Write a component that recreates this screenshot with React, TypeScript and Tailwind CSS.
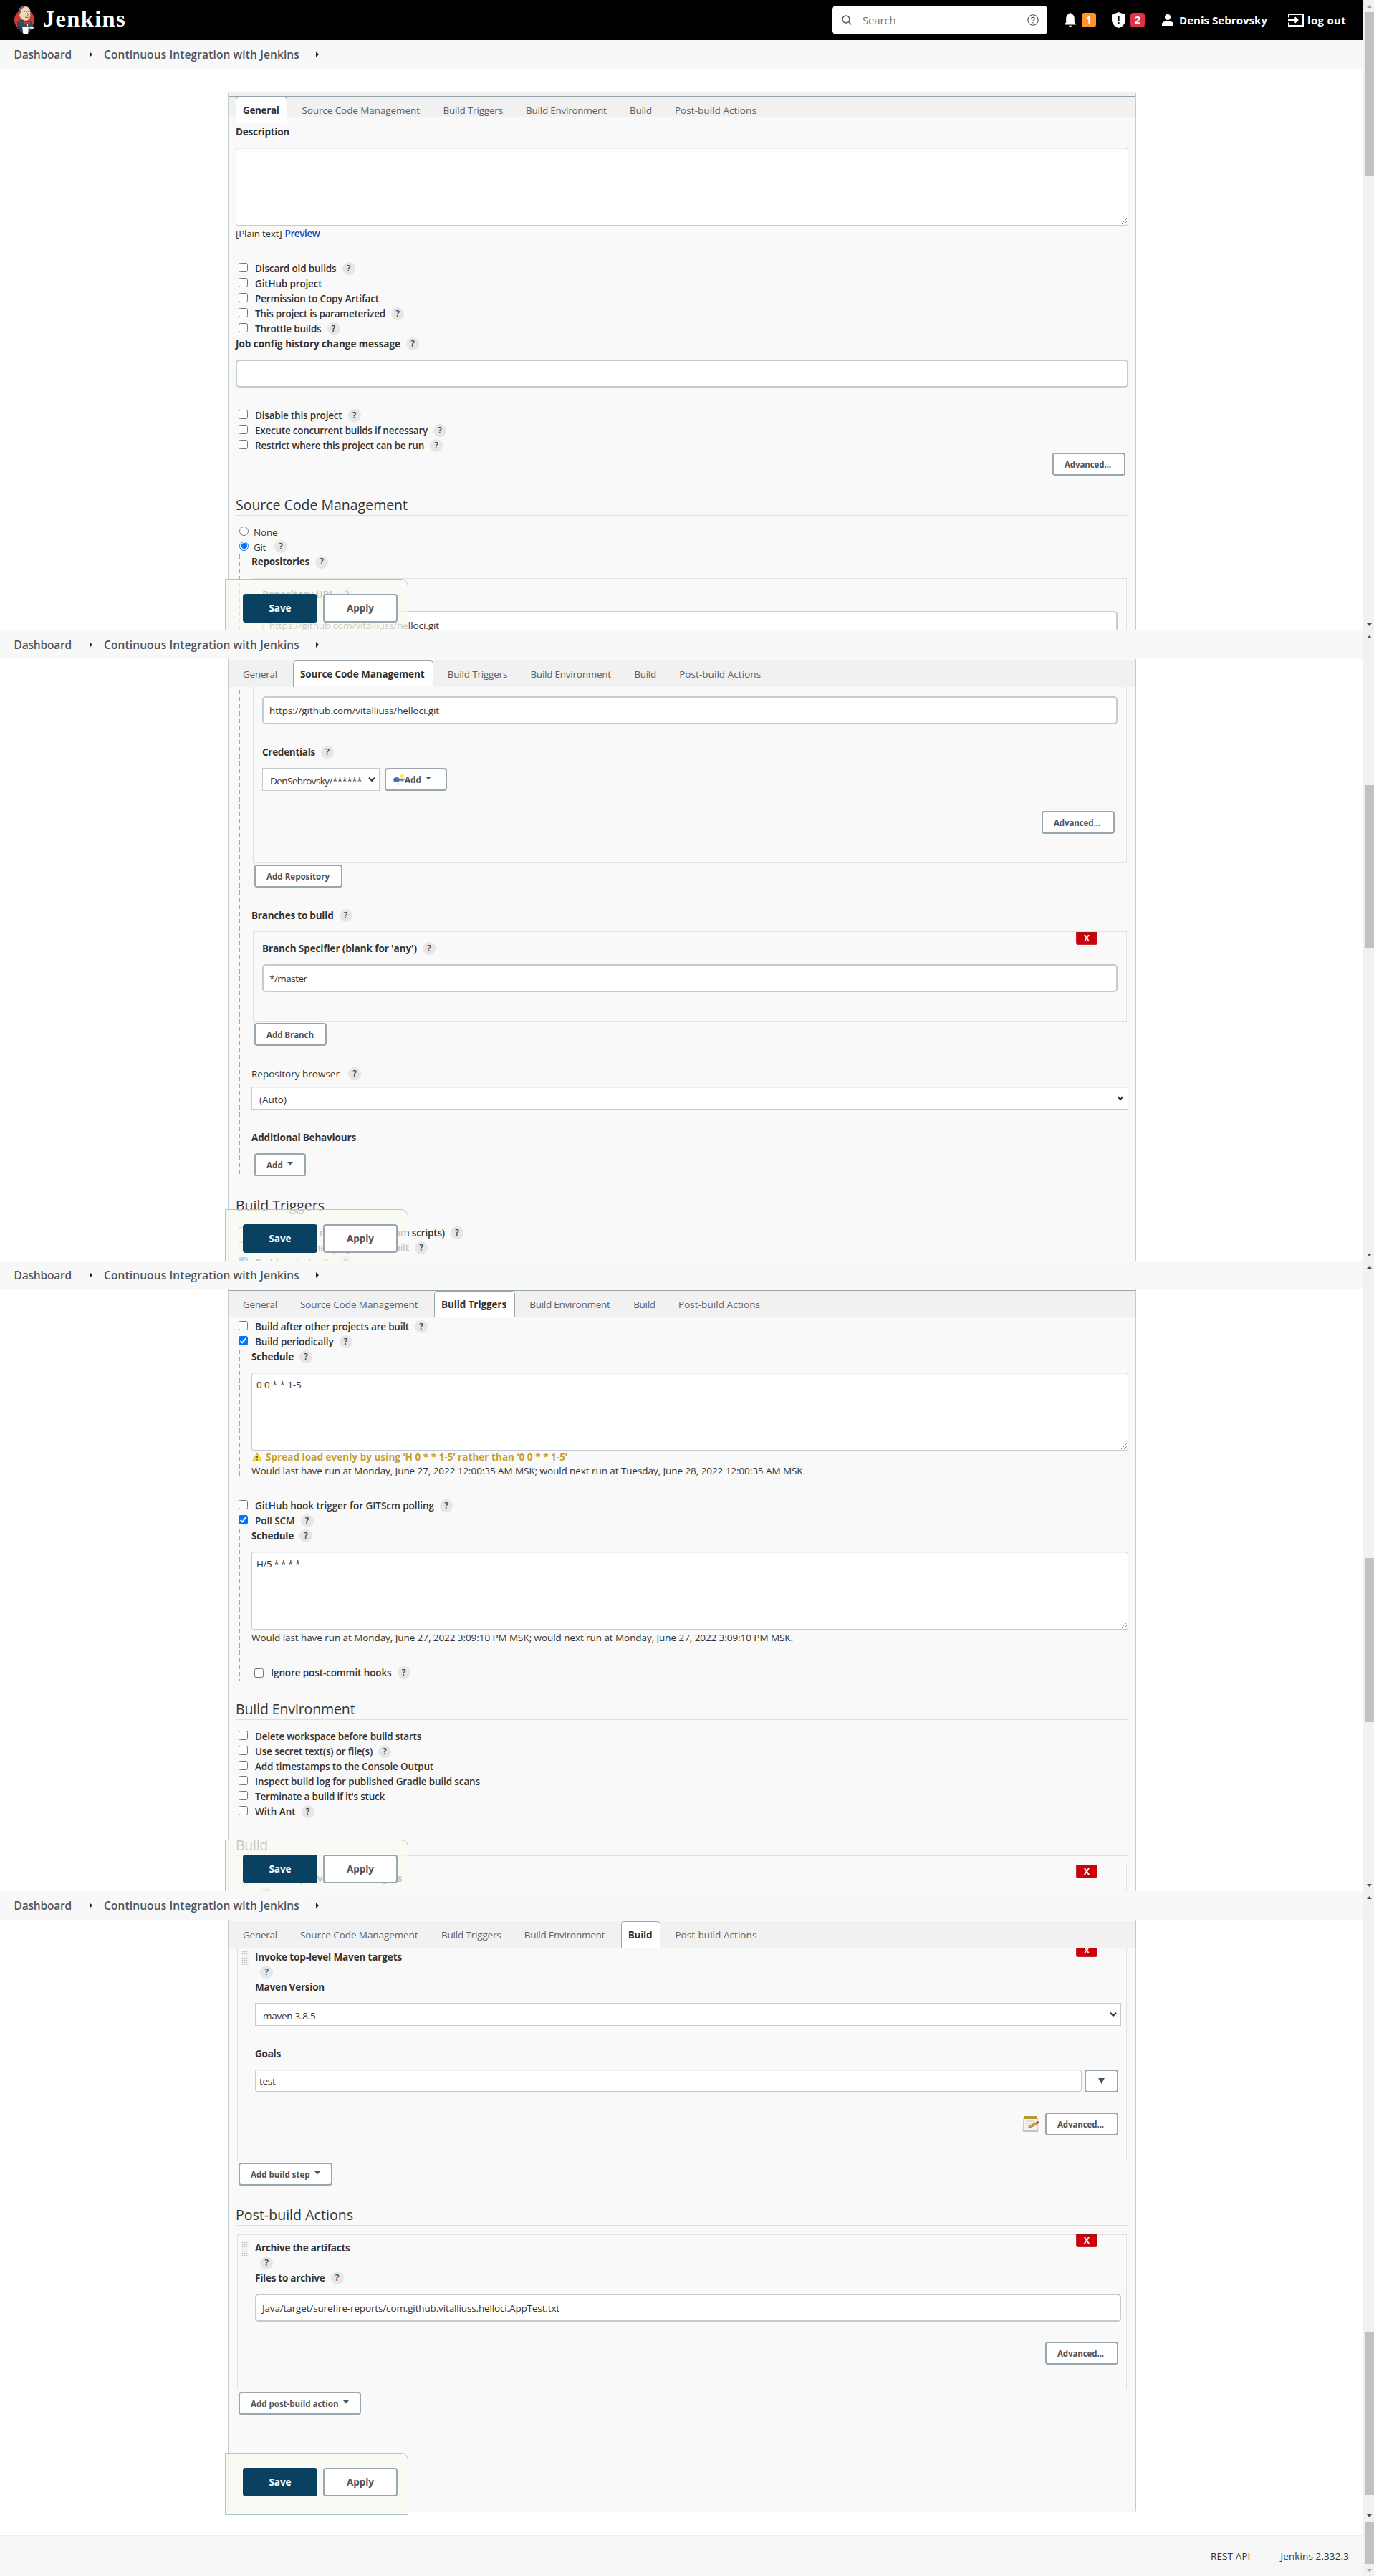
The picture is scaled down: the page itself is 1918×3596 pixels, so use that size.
import React, { useLayoutEffect, useRef, useState } from "react";

/** Inline text whose tracking is adjusted so that it takes `w` pixels. */
function T({ children, w, className = "" }: { children: string; w: number; className?: string }) {
  const ref = useRef<HTMLSpanElement>(null);
  const [spacing, setSpacing] = useState(0);
  useLayoutEffect(() => {
    if (ref.current) {
      const natural = ref.current.getBoundingClientRect().width;
      setSpacing((w - natural) / children.length);
    }
  }, []);
  return (
    <span ref={ref} className={`inline-block shrink-0 whitespace-pre ${className}`} style={{ letterSpacing: `${spacing}px` }}>
      {children}
    </span>
  );
}

function Help({ className = "ml-2" }: { className?: string }) {
  return (
    <span
      className={`mb-px flex h-[18px] w-[18px] shrink-0 items-center justify-center rounded-full bg-[#e6e6e6] pb-px text-[12.5px] font-semibold text-[#3c4147] ${className}`}
    >
      ?
    </span>
  );
}

function Label({ text, w, help, className = "" }: { text: string; w: number; help?: boolean; className?: string }) {
  return (
    <div className={`flex h-[21px] items-center ${className}`}>
      <T w={w} className="mb-[2px] font-bold">{text}</T>
      {help && <Help />}
    </div>
  );
}

function Check({ text, w, help, checked, className = "", low }: { text: string; w: number; help?: boolean; checked?: boolean; className?: string; low?: boolean }) {
  return (
    <div className={`flex h-[21px] items-center pl-1 ${className}`}>
      <span
        className={`flex h-[13px] w-[13px] shrink-0 items-center justify-center rounded-[2.5px] border ${low ? "" : "mb-1"} ${
          checked ? "border-[#0075ff] bg-[#0075ff]" : "border-[#767676] bg-white"
        }`}
      >
        {checked && (
          <svg viewBox="0 0 11 11" className="h-[11px] w-[11px]">
            <path d="M1.6 5.8 L4.2 8.4 L9.4 2" fill="none" stroke="#fff" strokeWidth="1.9" />
          </svg>
        )}
      </span>
      <T w={w} className="mb-[2px] ml-[10px] font-semibold">{text}</T>
      {help && <Help />}
    </div>
  );
}

function Radio({ text, w, help, checked, className = "" }: { text: string; w: number; help?: boolean; checked?: boolean; className?: string }) {
  return (
    <div className={`flex h-[21px] items-center pl-[5px] ${className}`}>
      <span className={`mb-[3px] flex h-[13px] w-[13px] shrink-0 items-center justify-center rounded-full border bg-white ${checked ? "border-[#0075ff]" : "border-[#767676]"}`}>
        {checked && <span className="h-[8px] w-[8px] rounded-full bg-[#0075ff]" />}
      </span>
      <T w={w} className="ml-[7px]">{text}</T>
      {help && <Help className="ml-3" />}
    </div>
  );
}

function Heading({ text, w, className = "" }: { text: string; w: number; className?: string }) {
  return (
    <h2 className={`flex h-[30px] items-center border-b border-[#dcdfe1] text-[19.5px] leading-none font-medium text-[#333] ${className}`}>
      <T w={w}>{text}</T>
    </h2>
  );
}

function Input({ text, w, className = "" }: { text?: string; w?: number; className?: string }) {
  return (
    <div className={`flex h-[39px] items-center rounded-[5px] border-2 border-[#c3cdd1] bg-white pl-2 ${className}`}>
      {text && w && <T w={w}>{text}</T>}
    </div>
  );
}

function TextArea({ text, w, className = "" }: { text?: string; w?: number; className?: string }) {
  return (
    <div className={`relative h-[109px] rounded-[3px] border border-[#c3cdd1] bg-white pt-[6px] pl-[6px] shadow-[inset_0_1px_1px_#00000012] ${className}`}>
      {text && w && <T w={w} className="leading-[20px]">{text}</T>}
      <svg viewBox="0 0 9 9" className="absolute right-[1px] bottom-[1px] h-[9px] w-[9px]">
        <path d="M1 9 L9 1 M5 9 L9 5" stroke="#7a7a7a" strokeWidth="0.9" />
      </svg>
    </div>
  );
}

function Select({ text, w, className = "" }: { text: string; w: number; className?: string }) {
  return (
    <div className={`flex h-8 items-center justify-between border border-[#c3cdd1] bg-white pr-[5px] pl-[10px] shadow-[inset_0_1px_1px_#00000012] ${className}`}>
      <T w={w} className="pt-1">{text}</T>
      <svg viewBox="0 0 10 8" className="h-2 w-[10px]">
        <path d="M1 1.8 L5 5.8 L9 1.8" fill="none" stroke="#333" strokeWidth="2.1" />
      </svg>
    </div>
  );
}

function Caret() {
  return (
    <svg viewBox="0 0 8 5" className="mb-1 ml-[6px] h-[5px] w-2">
      <path d="M0 0 H8 L4 4.6 Z" fill="#4d545d" />
    </svg>
  );
}

function Button({ text, w, caret, className = "" }: { text: string; w: number; caret?: boolean; className?: string }) {
  return (
    <div className={`flex h-8 items-center rounded-[4px] border-2 border-[#98a6b0] bg-white pl-[15px] text-[11.5px] font-bold text-[#4d545d] ${className}`}>
      <T w={w} className="mt-px">{text}</T>
      {caret && <Caret />}
    </div>
  );
}

function Advanced({ className = "" }: { className?: string }) {
  return <Button text="Advanced..." w={65} className={`w-[102px] pl-4 ${className}`} />;
}

function Delete({ className = "top-0" }: { className?: string }) {
  return (
    <span className={`absolute right-[40px] flex h-[18px] w-[30px] items-center justify-center rounded-b-[3px] border border-[#cc2a2a] border-t-[#9c1c14] bg-[#cb000e] text-[12px] font-bold text-white ${className}`}>
      X
    </span>
  );
}

function Grip() {
  return (
    <span className="mr-2 h-5 w-[11px] shrink-0 bg-[radial-gradient(circle,#b9b9b9_0.7px,transparent_1.1px)] bg-[length:3px_3px]" />
  );
}

const DASHES = "ml-1 pl-[18px] bg-[linear-gradient(#a8a8a8_60%,transparent_60%)] bg-[length:2px_10px] bg-repeat-y";

const TABS = [
  { name: "General", w: 48, bold: 50.5, box: "w-[70px]", active: "w-[72.4px]" },
  { name: "Source Code Management", w: 164.5, bold: 173.5, box: "w-[187px]", active: "w-[195.7px]" },
  { name: "Build Triggers", w: 83.5, bold: 91, box: "w-[105.7px]", active: "w-[113.2px]" },
  { name: "Build Environment", w: 112.5, bold: 119, box: "w-[135px]", active: "w-[141px]" },
  { name: "Build", w: 30.5, bold: 33.5, box: "w-[52.8px]", active: "w-[55.7px]" },
  { name: "Post-build Actions", w: 114, bold: 120, box: "w-[136px]", active: "w-[142px]" },
];

function TabBar({ active, className = "h-[38px]" }: { active: string; className?: string }) {
  return (
    <div className={`flex items-start gap-[10px] border-t border-[#94a2ac] bg-[#f1f1f1] pl-[10px] ${className}`}>
      {TABS.map((t) => {
        const on = t.name === active;
        return (
          <div
            key={t.name}
            className={`flex h-[37px] shrink-0 items-center pb-px pl-[9px] ${
              on ? `rounded-t-[5px] border border-b-0 border-[#9aa5ad] bg-white ${t.active}` : `pl-[10px] text-[#5a626b] ${t.box}`
            }`}
          >
            <T w={on ? t.bold : t.w} className={on ? "font-bold" : "mt-px"}>{t.name}</T>
          </div>
        );
      })}
    </div>
  );
}

function Chevron({ className }: { className: string }) {
  return (
    <svg viewBox="0 0 4 8" className={`mt-[-1px] h-2 w-1 ${className}`}>
      <path d="M0 0 L4 4 L0 8 Z" fill="#222" />
    </svg>
  );
}

function Breadcrumbs() {
  return (
    <nav className="flex h-10 shrink-0 items-center bg-[#f8f8f8] pl-[19.5px] text-[15.5px] font-semibold text-[#4d545d]">
      <T w={80.5}>Dashboard</T>
      <Chevron className="ml-[25px]" />
      <T w={273} className="ml-4">Continuous Integration with Jenkins</T>
      <Chevron className="ml-[23px]" />
    </nav>
  );
}

function SaveBar({ className = "top-[808px] h-[90px]" }: { className?: string }) {
  return (
    <div className={`absolute left-[314px] flex w-[256px] items-start gap-2 rounded-tr-[10px] border border-[#a9cbb8] bg-[#f8faf1]/75 pt-5 pl-6 text-[13.5px] font-bold ${className}`}>
      <div className="flex h-10 w-[104px] items-center justify-center rounded-[4px] bg-[#0a4060] text-white">
        <T w={31}>Save</T>
      </div>
      <div className="flex h-10 w-[104px] items-center justify-center rounded-[4px] border-2 border-[#98a6b0] bg-white text-[#4d545d]">
        <T w={38}>Apply</T>
      </div>
    </div>
  );
}

function Arrow({ up, dim }: { up?: boolean; dim?: boolean }) {
  return (
    <svg viewBox="0 0 7 4" className="h-1 w-[7px]">
      <path d={up ? "M0 4 L3.5 0 L7 4 Z" : "M0 0 L3.5 4 L7 0 Z"} fill={dim ? "#a3a3a3" : "#505050"} />
    </svg>
  );
}

function Scrollbar({ before, thumb, top = true, dimTop, dimBottom }: { before: string; thumb: string; top?: boolean; dimTop?: boolean; dimBottom?: boolean }) {
  return (
    <div className="flex w-[15px] shrink-0 flex-col bg-[#f1f1f1]">
      {top && (
        <div className="flex h-[17px] shrink-0 items-center pl-[5px]">
          <Arrow up dim={dimTop} />
        </div>
      )}
      <div className={`shrink-0 ${before}`} />
      <div className={`ml-[2px] shrink-0 bg-[#c1c1c1] ${thumb}`} />
      <div className="mt-auto flex h-[17px] shrink-0 items-center pl-[5px]">
        <Arrow dim={dimBottom} />
      </div>
    </div>
  );
}

function Butler() {
  return (
    <svg viewBox="0 0 28 40" className="h-10 w-7">
      <ellipse cx="14" cy="20" rx="14" ry="14.5" fill="#d33833" />
      <path d="M4 22 Q8 18 13 20 L24 22 Q27 27 25 30 L20 38 L11 38 L4 31 Z" fill="#335061" />
      <path d="M6 27 L12 30 L11 37 Q4 33 6 27Z" fill="#1e3a4c" />
      <path d="M6.5 11 Q5 2 13 .7 Q22 .4 22.5 8 Q23.4 14 21.6 18 Q18 23 12 20 Q7 17.500 6.500 11Z" fill="#f0d6b7" stroke="#5b4a3c" strokeWidth=".5" />
      <path d="M6.500 13 Q4 5 9 2 Q13 0 14 2 Q9 4 9 9 Q8 12 6.500 13Z" fill="#6d6b6d" />
      <path d="M14 8 Q15.500 7 17 8.200 M19 8 Q20.500 7.200 21.500 8.300" stroke="#3b2a20" strokeWidth="1" fill="none" />
      <path d="M18 10 Q20.500 13 18.200 13.600 M15 16 Q18 18 20.500 15.600" stroke="#7a4c33" strokeWidth=".9" fill="none" />
      <path d="M12 20.500 L17 23 L22 20.500 L22.500 26 L18 24.500 L13 27Z" fill="#d33833" stroke="#7b1c1a" strokeWidth=".5" />
      <path d="M16 25 L19.500 25 L18.500 29Z" fill="#fff" />
      <path d="M11 29 L20 29 L19 39.500 L12.500 39.500Z" fill="#fff" />
      <path d="M20 30 Q25 27 27.500 30 Q27 33 23.500 33Z" fill="#f4efe8" stroke="#555" strokeWidth=".5" />
    </svg>
  );
}

function Header() {
  return (
    <header className="flex h-14 shrink-0 items-center bg-black pl-5 text-white">
      <Butler />
      <T w={116} className="-mt-1 ml-3 font-['Liberation_Serif',serif] text-[32.5px] leading-none font-bold">Jenkins</T>
      <div className="ml-[986px] flex h-10 w-[300px] items-center rounded-[5px] bg-white pr-3 pl-[13px]">
        <svg viewBox="0 0 14 14" className="h-[14px] w-[14px]">
          <circle cx="6" cy="6" r="5" fill="none" stroke="#4d545d" strokeWidth="1.400" />
          <path d="M9.800 9.800 L13.300 13.300" stroke="#4d545d" strokeWidth="1.600" />
        </svg>
        <T w={46.5} className="ml-[15px] text-[15px] text-[#757575]">Search</T>
        <svg viewBox="0 0 16 16" className="ml-auto h-4 w-4">
          <circle cx="8" cy="8" r="7.200" fill="none" stroke="#4d545d" strokeWidth="1.100" />
          <path d="M5.800 6.300 Q5.800 4.300 8 4.300 Q10.200 4.300 10.200 6.100 Q10.200 7.200 9 7.900 Q8 8.500 8 9.600" fill="none" stroke="#4d545d" strokeWidth="1.200" />
          <circle cx="8" cy="11.700" r=".8" fill="#4d545d" />
        </svg>
      </div>
      <svg viewBox="0 0 16 20" className="ml-6 h-5 w-4" fill="#fff">
        <path d="M8 0 C8.900 0 9.500.6 9.500 1.600 C12.300 2.300 13.800 4.700 13.800 7.600 V13.200 L16 15.600 V16.600 H0 V15.600 L2.200 13.200 V7.600 C2.200 4.700 3.700 2.300 6.500 1.600 C6.500.6 7.100 0 8 0Z" />
        <path d="M6 17.800 H10 Q9.700 19.800 8 19.800 Q6.300 19.800 6 17.800Z" />
      </svg>
      <span className="ml-2 flex h-5 w-5 items-center justify-center rounded-[4px] bg-[#ff9626] text-[14.5px] font-bold">1</span>
      <svg viewBox="0 0 19 22" className="ml-[22px] h-[22px] w-[19px]">
        <path d="M9.500 0 L19 3.500 V10.500 C19 16 15 20.500 9.500 22 C4 20.500 0 16 0 10.500 V3.500Z" fill="#fff" />
        <path d="M9.500 6 V12.300 M9.500 14 V16.300" stroke="#000" strokeWidth="2.200" />
      </svg>
      <span className="ml-[7px] flex h-5 w-5 items-center justify-center rounded-[4px] bg-[#dc3545] text-[14.5px] font-bold">2</span>
      <svg viewBox="0 0 16 16" className="ml-6 h-4 w-4" fill="#fff">
        <circle cx="8" cy="4" r="4" />
        <path d="M0 16 V13.500 C0 10.500 5 9.600 8 9.600 C11 9.600 16 10.500 16 13.500 V16Z" />
      </svg>
      <T w={123} className="ml-2 text-[15px] font-bold">Denis Sebrovsky</T>
      <svg viewBox="0 0 22 18" className="ml-[29px] h-[18px] w-[22px]" fill="none" stroke="#fff" strokeWidth="2">
        <path d="M1 5.500 V1 H21 V17 H1 V12.500" />
        <path d="M0 9 H12.500" />
        <path d="M9.500 5.300 L13.500 9 L9.500 12.700" />
      </svg>
      <T w={54} className="ml-[5px] text-[15px] font-bold">log out</T>
    </header>
  );
}

function KeyIcon() {
  return (
    <svg viewBox="0 0 16 16" className="h-4 w-4">
      <ellipse cx="8" cy="14.500" rx="6" ry="1" fill="#e4e4e4" />
      <path d="M7 6.800 H15.500 V9.500 H13.500 V10.500 H11 V9.800 H7Z" fill="#5b87bb" />
      <ellipse cx="4.500" cy="8.500" rx="4.300" ry="3.600" fill="#4a77ae" />
      <circle cx="3" cy="8.500" r="1.100" fill="#2c4f80" />
      <circle cx="12.200" cy="3.600" r="2.500" fill="#fbe94e" />
    </svg>
  );
}

function NotepadIcon() {
  return (
    <svg viewBox="0 0 24 24" className="h-6 w-6">
      <path d="M2 4 H21 L22 22 H1Z" fill="#f1f1ef" stroke="#b9b9b6" strokeWidth=".8" />
      <rect x="3" y="1" width="17" height="4" fill="#b59a35" />
      <path d="M5 8 H18 M5 11 H16 M5 14 H10" stroke="#c9c9c9" strokeWidth=".9" />
      <rect x="1" y="20" width="21" height="3" fill="#c3c3c1" />
      <path d="M8 17.500 L10 14.500 L20.500 9 L22 11.300 L12 17Z" fill="#d99a3c" stroke="#8d5f1e" strokeWidth=".6" />
      <path d="M20 9.200 L22.500 8 L24 10 L21.700 11.500Z" fill="#cf3b36" />
    </svg>
  );
}

function WarningIcon() {
  return (
    <svg viewBox="0 0 15 14" className="mr-[5px] ml-px h-[14px] w-[14px] shrink-0">
      <path d="M7.500 1 L14.300 13 H.7Z" fill="#f7dc38" stroke="#c9a82c" strokeWidth="1" strokeLinejoin="round" />
      <path d="M7.500 4.800 V9" stroke="#3b3722" strokeWidth="1.500" />
      <circle cx="7.500" cy="11" r=".9" fill="#3b3722" />
    </svg>
  );
}

function Panel({ children, className = "" }: { children: React.ReactNode; className?: string }) {
  return <section className={`ml-[318px] w-[1268px] shrink-0 border-x border-[#c3cdd1] bg-[#f9f9f9] ${className}`}>{children}</section>;
}

const BOX = "relative border-[#dfe1e3]";

export default function App() {
  return (
    <div className="w-[1918px] overflow-hidden bg-white font-['Open_Sans','Noto_Sans',sans-serif] text-[13.5px] leading-[20px] text-[#333]">
      {/* General */}
      <div className="flex h-[880px] overflow-hidden">
        <main className="relative flex h-[880px] w-[1903px] flex-col overflow-hidden">
          <Header />
          <Breadcrumbs />
          <Panel className="mt-8 h-[800px] rounded-t-[4px] border-t">
            <div className="h-[5px] bg-[#f1f1f1]" />
            <TabBar active="General" className="h-[29px]" />
            <div className="px-[10px]">
              <Label text="Description" w={75} className="mt-[11px]" />
              <TextArea className="mt-[11px]" />
              <div className="flex h-[21px] items-center">
                <T w={64.5}>[Plain text]</T>
                <T w={49} className="ml-1 font-semibold text-[#0f4db8]">Preview</T>
              </div>
              <Check text="Discard old builds" w={113.5} help className="mt-[29px]" />
              <Check text="GitHub project" w={93.5} />
              <Check text="Permission to Copy Artifact" w={173} />
              <Check text="This project is parameterized" w={182} help />
              <Check text="Throttle builds" w={92.5} help />
              <Label text="Job config history change message" w={230} help />
              <Input className="mt-[11px]" />
              <Check text="Disable this project" w={121.5} help className="mt-[29px]" />
              <Check text="Execute concurrent builds if necessary" w={241} help />
              <Check text="Restrict where this project can be run" w={236} help />
              <Advanced className="-mt-px mr-1 ml-auto" />
              <Heading text="Source Code Management" w={240} className="mt-[26px]" />
              <Radio text="None" w={33.5} className="mt-3" />
              <Radio text="Git" w={17} help checked />
              <div className={DASHES}>
                <Label text="Repositories" w={81} help className="pt-px" />
                <div className={`mt-3 mr-[2px] ml-[2px] h-[100px] border px-3 pt-3 ${BOX}`}>
                  <Label text="Repository URL" w={101} help />
                  <Input text="https://github.com/vitalliuss/helloci.git" w={237} className="mt-3" />
                </div>
              </div>
            </div>
          </Panel>
          <SaveBar />
        </main>
        <Scrollbar before="h-0" thumb="h-[228px]" dimTop />
      </div>

      {/* Source Code Management */}
      <div className="flex h-[880px] overflow-hidden">
        <main className="relative flex h-[880px] w-[1903px] flex-col overflow-hidden">
          <Breadcrumbs />
          <Panel className="h-[860px] pt-px">
            <TabBar active="Source Code Management" />
            <div className="px-[10px]">
              <div className={`bg-[position:0_4px] ${DASHES}`}>
                <div className={`mr-[2px] ml-[2px] border border-t-0 px-3 pt-[13px] pb-10 ${BOX}`}>
                  <Input text="https://github.com/vitalliuss/helloci.git" w={237} />
                  <Label text="Credentials" w={74} help className="mt-[29px]" />
                  <div className="mt-[11px] flex gap-[7px]">
                    <Select text="DenSebrovsky/******" w={128} className="w-[164px]" />
                    <div className="flex h-8 w-[87px] items-center rounded-[4px] border-2 border-[#98a6b0] bg-white pl-[10px] text-[11.5px] font-bold text-[#4d545d]">
                      <KeyIcon />
                      <T w={23} className="mt-px">Add</T>
                      <Caret />
                    </div>
                  </div>
                  <Advanced className="mt-7 mr-1 ml-auto" />
                </div>
                <Button text="Add Repository" w={88} className="mt-[2px] ml-1 w-[123px]" />
                <Label text="Branches to build" w={114.5} help className="mt-[29px]" />
                <div className={`mt-[11px] mr-[2px] ml-[2px] border px-3 pt-[13px] pb-10 ${BOX}`}>
                  <Delete />
                  <Label text="Branch Specifier (blank for 'any')" w={216} help />
                  <Input text="*/master" w={52.5} className="mt-[11px]" />
                </div>
                <Button text="Add Branch" w={66} className="mt-[2px] ml-1 w-[101px]" />
                <div className="mt-[29px] flex h-[21px] items-center">
                  <T w={123} className="mb-[2px] font-medium">Repository browser</T>
                  <Help className="ml-3" />
                </div>
                <Select text="(Auto)" w={38} className="mt-[7px] pr-1" />
                <Label text="Additional Behaviours" w={146} className="mt-[29px]" />
                <Button text="Add" w={23} caret className="mt-[11px] ml-1 w-[72px]" />
              </div>
              <Heading text="Build Triggers" w={124} className="mt-[26px]" />
              <Check text="Trigger builds remotely (e.g., from scripts)" w={265} help className="mt-[13px]" />
              <Check text="Build after other projects are built" w={215} help />
              <Check text="Build periodically" w={109.5} help checked />
            </div>
          </Panel>
          <SaveBar />
        </main>
        <Scrollbar before="h-[199px]" thumb="h-[228px]" />
      </div>

      {/* Build Triggers and Build Environment */}
      <div className="flex h-[880px] overflow-hidden">
        <main className="relative flex h-[880px] w-[1903px] flex-col overflow-hidden">
          <Breadcrumbs />
          <Panel className="h-[860px] pt-px">
            <TabBar active="Build Triggers" />
            <div className="px-[10px]">
              <Check text="Build after other projects are built" w={215} help className="mt-[3px]" />
              <Check text="Build periodically" w={109.5} help checked />
              <div className={DASHES}>
                <Label text="Schedule" w={59} help />
                <TextArea text="0 0 * * 1-5" w={62.5} className="mt-[11px]" />
                <div className="flex h-[18px] items-center font-bold text-[#c8a02c]">
                  <WarningIcon />
                  <T w={421} className="mb-px">Spread load evenly by using ‘H 0 * * 1-5’ rather than ‘0 0 * * 1-5’</T>
                </div>
                <div className="flex h-[21px] items-center">
                  <T w={773} className="mb-[2px]">Would last have run at Monday, June 27, 2022 12:00:35 AM MSK; would next run at Tuesday, June 28, 2022 12:00:35 AM MSK.</T>
                </div>
              </div>
              <Check text="GitHub hook trigger for GITScm polling" w={250} help className="mt-7" />
              <Check text="Poll SCM" w={55.5} help checked />
              <div className={DASHES}>
                <Label text="Schedule" w={59} help />
                <TextArea text="H/5 * * * *" w={61} className="mt-[11px]" />
                <div className="mt-px flex h-[21px] items-center">
                  <T w={756} className="mb-[2px]">Would last have run at Monday, June 27, 2022 3:09:10 PM MSK; would next run at Monday, June 27, 2022 3:09:10 PM MSK.</T>
                </div>
                <Check text="Ignore post-commit hooks" w={168.5} help low className="mt-7" />
              </div>
              <Heading text="Build Environment" w={166.5} className="mt-[25px]" />
              <Check text="Delete workspace before build starts" w={232} className="mt-[13px]" />
              <Check text="Use secret text(s) or file(s)" w={164} help />
              <Check text="Add timestamps to the Console Output" w={249} />
              <Check text="Inspect build log for published Gradle build scans" w={314} />
              <Check text="Terminate a build if it's stuck" w={181} />
              <Check text="With Ant" w={56.5} help />
              <Heading text="Build" w={45} className="mt-[21px]" />
              <div className={`mt-3 mr-[2px] ml-[2px] h-[100px] border pt-2 pl-[5px] ${BOX}`}>
                <Delete />
                <div className="flex h-[21px] items-center">
                  <Grip />
                  <T w={205} className="mb-[2px] font-bold">Invoke top-level Maven targets</T>
                </div>
                <div className="flex h-[21px] items-center pl-[19px]">
                  <Help className="ml-[7px]" />
                </div>
              </div>
            </div>
          </Panel>
          <SaveBar />
        </main>
        <Scrollbar before="h-[398px]" thumb="h-[229px]" />
      </div>

      {/* Build and Post-build Actions */}
      <div className="flex h-[880px] overflow-hidden">
        <main className="relative flex h-[880px] w-[1903px] flex-col overflow-hidden">
          <Breadcrumbs />
          <Panel className="h-[827px] rounded-b-[4px] border-b pt-px">
            <TabBar active="Build" />
            <div className="px-[10px]">
              <div className={`mr-[2px] ml-[2px] overflow-hidden border border-t-0 pt-[3px] pr-[7px] pb-[35px] pl-[5px] ${BOX}`}>
                <Delete className="-top-[5px]" />
                <div className="flex h-[21px] items-center">
                  <Grip />
                  <T w={205} className="mb-[2px] font-bold">Invoke top-level Maven targets</T>
                </div>
                <div className="pl-[19px]">
                  <div className="flex h-[21px] items-center">
                    <Help className="ml-[7px]" />
                  </div>
                  <Label text="Maven Version" w={97} />
                  <Select text="maven 3.8.5" w={73.5} className="mt-[11px]" />
                  <Label text="Goals" w={36} className="mt-[29px]" />
                  <div className="mt-[11px] mr-1 flex h-8 items-start gap-1">
                    <div className="flex h-[31px] grow items-center rounded-[3px] border border-[#c3cdd1] bg-white pt-px pl-[5px] shadow-[inset_0_1px_1px_#00000012]">
                      <T w={22.5}>test</T>
                    </div>
                    <div className="flex h-8 w-[47px] items-center justify-center rounded-[4px] border-2 border-[#98a6b0] bg-white">
                      <svg viewBox="0 0 9 8" className="h-2 w-[9px]">
                        <path d="M0 0 H9 L4.500 8 Z" fill="#4d545d" />
                      </svg>
                    </div>
                  </div>
                  <div className="mt-7 mr-1 flex items-center justify-end gap-2">
                    <NotepadIcon />
                    <Advanced />
                  </div>
                </div>
              </div>
              <Button text="Add build step" w={82.5} caret className="mt-[2px] ml-1 w-[131px]" />
              <Heading text="Post-build Actions" w={164} className="mt-[26px]" />
              <div className={`mt-3 mr-[2px] ml-[2px] border pt-2 pr-[7px] pb-[35px] pl-[5px] ${BOX}`}>
                <Delete className="-top-px" />
                <div className="flex h-[21px] items-center">
                  <Grip />
                  <T w={132.5} className="mb-[2px] font-bold">Archive the artifacts</T>
                </div>
                <div className="pl-[19px]">
                  <div className="flex h-[21px] items-center">
                    <Help className="ml-[7px]" />
                  </div>
                  <Label text="Files to archive" w={97.5} help />
                  <Input text="Java/target/surefire-reports/com.github.vitalliuss.helloci.AppTest.txt" w={415} className="mt-[11px]" />
                  <Advanced className="mt-7 mr-1 ml-auto" />
                </div>
              </div>
              <Button text="Add post-build action" w={122.5} caret className="mt-[2px] ml-1 w-[171px]" />
            </div>
          </Panel>
          <SaveBar className="top-[784px] h-[87px]" />
        </main>
        <Scrollbar before="h-[598px]" thumb="h-[228px]" />
      </div>

      {/* Footer */}
      <div className="flex h-[76px] overflow-hidden">
        <div className="flex w-[1903px] flex-col pt-[19px]">
          <footer className="flex grow items-center justify-end border-t border-[#efefef] bg-[#f7f7f7] pr-5 font-medium">
            <T w={55.5}>REST API</T>
            <T w={95.5} className="ml-[42px]">Jenkins 2.332.3</T>
          </footer>
        </div>
        <Scrollbar top={false} before="h-0" thumb="h-[59px]" dimBottom />
      </div>
    </div>
  );
}
